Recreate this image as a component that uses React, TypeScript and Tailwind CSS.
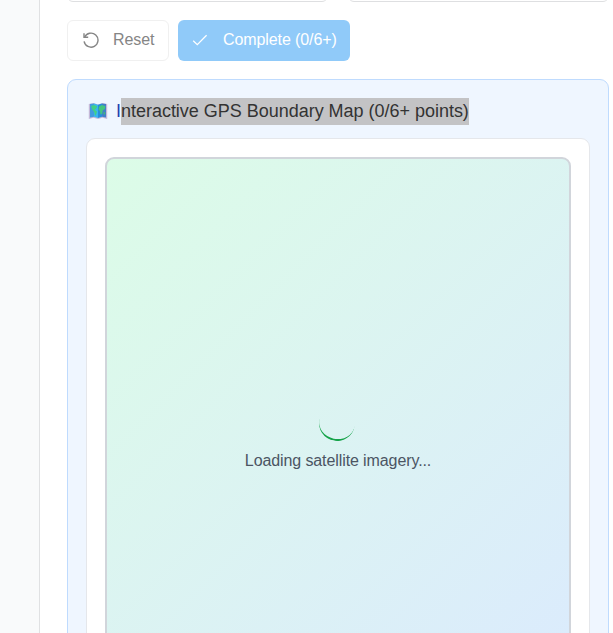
function ResetIcon() {
  return (
    <svg className="h-[18px] w-[18px]" viewBox="0 0 18 18" fill="none" stroke="#858585" strokeWidth="1.4">
      <path d="M2.6 5.3A7 7 0 1 1 2.1 9.3" />
      <path d="M2 1.3V5.3H6.2" />
    </svg>
  );
}

function CheckIcon() {
  return (
    <svg className="h-4 w-4 -translate-y-px" viewBox="0 0 16 16" fill="none" stroke="white" strokeWidth="1.3">
      <path d="M1.2 8.7L5.3 12.6L14.6 3.3" />
    </svg>
  );
}

function WorldMap() {
  return (
    <svg className="h-[18px] w-[20px] shrink-0 -translate-y-px" viewBox="0 0 20 18">
      <path d="M.8 2L5.5 1L10 2.6L14.5 1L19.2 2V17L14.5 15.8L10 17L5.5 15.8L.8 17Z" fill="#c5b8d8" />
      <path d="M2 2L6 1.4V14.8L2 15.5Z" fill="#429bdf" />
      <path d="M6 1.4L10 2.7V16L6 14.8Z" fill="#38b5f0" />
      <path d="M10 2.7L14 1.4V14.8L10 16Z" fill="#268edb" />
      <path d="M14 1.4L18 2V15.5L14 14.8Z" fill="#427fc8" />
      <path d="M3 4L6 3L9.2 4.2L8 7L6.5 7.7L9 9.5L8.2 12.3L7 14L6.3 10L4.2 7.4Z" fill="#43cf86" />
      <path d="M11 4.4L14 3L17.4 4.2L16.8 7L14.8 8.3L14 12L12.5 12.6L12 9L10.6 7.8Z" fill="#43c67d" />
      <path d="M15.4 10.5L17.2 10.1V12.6L15.4 12.2Z" fill="#42b67d" />
    </svg>
  );
}

export default function App() {
  return (
    <div className="flex h-[633px] w-[613px] overflow-hidden bg-white font-['Liberation_Sans',Arial,sans-serif]">
      <aside className="w-10 shrink-0 border-r border-[#e0e1e3] bg-[#f9fafb]" />
      <main className="w-[569px] shrink-0 pl-[27px]">
        <div className="flex h-[2px] items-end justify-between overflow-hidden">
          <div className="h-10 w-[261px] shrink-0 rounded-md border border-[#dedfe1]" />
          <div className="h-10 w-[261px] shrink-0 rounded-md border border-[#dedfe1]" />
        </div>
        <div className="mt-[18px] flex h-[41px] gap-[9px] text-base">
          <button className="flex w-[102px] items-center rounded-md border border-[#f0f0f0] pl-[14px] text-[#858585]">
            <ResetIcon />
            <span className="ml-[13px] -mt-[2px] tracking-[-0.1px]">Reset</span>
          </button>
          <button className="flex w-[172px] items-center rounded-md bg-[#90caf9] pl-[14px] text-white">
            <CheckIcon />
            <span className="ml-[15px] -mt-[2px] whitespace-nowrap tracking-[-0.1px]">Complete (0/6+)</span>
          </button>
        </div>
        <section className="mt-[18px] h-[640px] rounded-[9px] border border-[#bfdbfe] bg-[#eff6ff] px-[18px] pt-[18px]">
          <h3 className="flex h-[27px] items-center pl-[2px] text-[18px] leading-[27px] tracking-[-0.02px]">
            <WorldMap />
            <span className="ml-2 whitespace-nowrap text-[#1e40af]">
              I<span className="inline-block h-[27px] bg-[#c3c3c5] text-[#333333]">nteractive GPS Boundary Map (0/6+ points)</span>
            </span>
          </h3>
          <div className="mt-[13px] h-[602px] rounded-[9px] border border-[#e5e7eb] bg-white p-[18px]">
            <div className="flex h-[564px] flex-col items-center justify-center rounded-[9px] border-2 border-[#d1d5db] bg-linear-[135deg] from-[#dcfce7] to-[#dbeafe]">
              <div className="h-9 w-9 -translate-x-px rotate-[12deg] rounded-full border-b-2 border-[#16a34a]" />
              <p className="mt-2 text-base leading-6 tracking-[-0.1px] text-[#4b5563]">Loading satellite imagery...</p>
            </div>
          </div>
        </section>
      </main>
    </div>
  );
}
